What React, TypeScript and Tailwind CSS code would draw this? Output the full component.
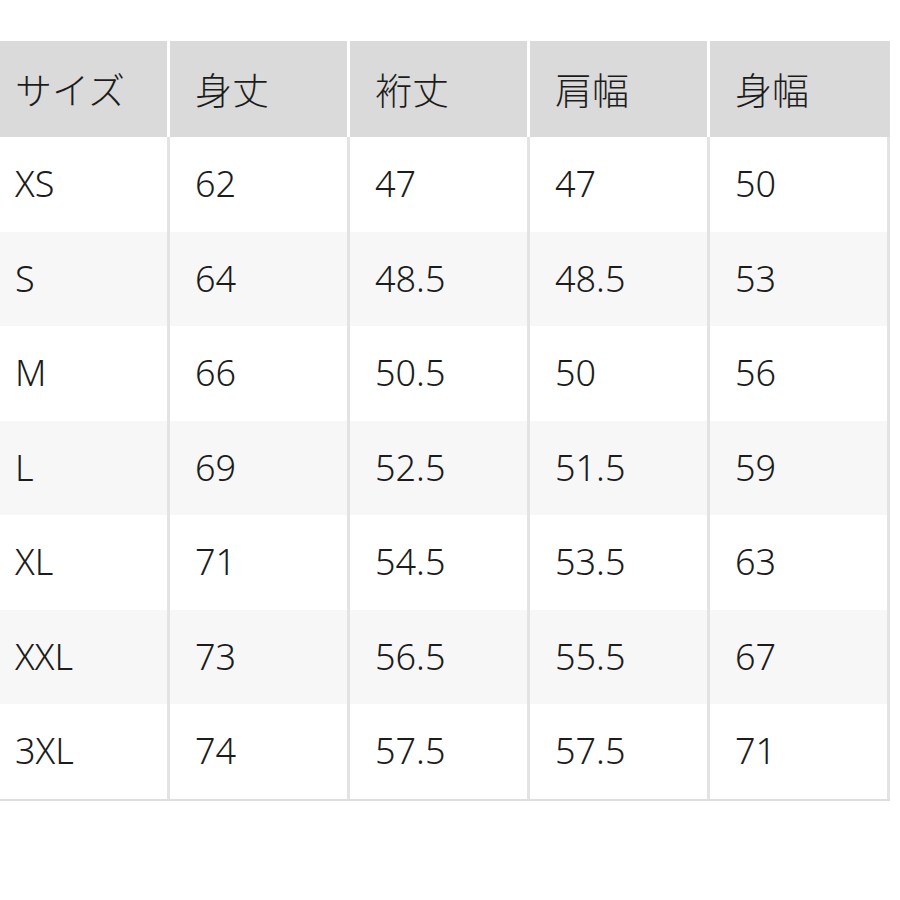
import React from 'react';

const headers = ['サイズ', '身丈', '裄丈', '肩幅', '身幅'];

const rows: string[][] = [
  ['XS', '62', '47', '47', '50'],
  ['S', '64', '48.5', '48.5', '53'],
  ['M', '66', '50.5', '50', '56'],
  ['L', '69', '52.5', '51.5', '59'],
  ['XL', '71', '54.5', '53.5', '63'],
  ['XXL', '73', '56.5', '55.5', '67'],
  ['3XL', '74', '57.5', '57.5', '71'],
];

export default function App() {
  return (
    <div
      className="w-[900px] h-[900px] bg-white overflow-hidden pt-[41px] text-[#1c1c1c] font-light"
      style={{ fontFamily: '"Noto Sans", "Noto Sans CJK JP", sans-serif' }}
    >
      <div className="ml-[-10px] w-[900px] border-b-2 border-[#dedede]">
        {/* Header */}
        <div className="grid grid-cols-[repeat(5,180px)] h-[96px] bg-[#dadada]">
          {headers.map((h, i) => (
            <div
              key={h}
              className={`flex items-center pl-[25px] pt-[2px] text-[37px] leading-none ${
                i === 4 ? 'border-r-[3px] border-[#dadada]' : 'border-r-[3px] border-white'
              }`}
            >
              {h}
            </div>
          ))}
        </div>

        {/* Body */}
        {rows.map((row, r) => (
          <div
            key={row[0]}
            className={`grid grid-cols-[repeat(5,180px)] h-[94.5px] ${
              r % 2 === 1 ? 'bg-[#f7f7f7]' : 'bg-white'
            }`}
          >
            {row.map((cell, c) => (
              <div
                key={c}
                className="flex items-center pl-[25px] text-[36px] leading-none border-r-[3px] border-[#e3e3e3]"
              >
                {cell}
              </div>
            ))}
          </div>
        ))}
      </div>
    </div>
  );
}
